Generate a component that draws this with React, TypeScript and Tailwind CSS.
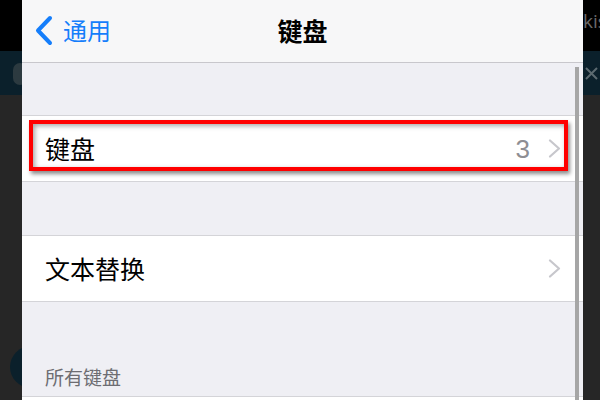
const cjk = { fontFamily: '"Noto Sans CJK SC", "Noto Sans", sans-serif' };

function Chevron() {
  return (
    <svg width="13" height="19" viewBox="0 0 13 19" fill="none">
      <path d="M2 1.5 L11 9.5 L2 17.5" stroke="#c7c7cc" strokeWidth="2.2" strokeLinecap="round" strokeLinejoin="round" />
    </svg>
  );
}

export default function App() {
  return (
    <div className="flex h-[400px] w-[600px] overflow-hidden" style={cjk}>
      {/* left background strip */}
      <div className="flex w-[22px] shrink-0 flex-col">
        <div className="h-[51px] bg-black" />
        <div className="relative h-[44px] bg-[#0b202b]">
          <div className="absolute left-[13px] top-[12px] h-[22px] w-[14px] rounded-full bg-[#2c3a40]" />
        </div>
        <div className="relative flex-1 bg-[#262626]">
          <div className="absolute left-[10px] top-[251px] h-[42px] w-[42px] rounded-full bg-[#0b202b]" />
        </div>
      </div>

      {/* phone screen */}
      <div className="relative flex w-[561px] shrink-0 flex-col bg-[#efeff4]">
        {/* nav bar */}
        <div className="grid h-[63px] grid-cols-3 items-center border-b border-[#c8c7cc] bg-[#f7f7f8] pb-[2px]">
          <div className="flex items-center gap-[10px] pl-[12px] text-[24px] text-[#157efb]">
            <svg width="19" height="31" viewBox="0 0 19 31" fill="none">
              <path d="M16 3 L4 15.5 L16 28" stroke="#157efb" strokeWidth="4" strokeLinecap="round" strokeLinejoin="round" />
            </svg>
            <span className="leading-none">通用</span>
          </div>
          <div className="text-center text-[25px] font-bold leading-none text-black">键盘</div>
          <div />
        </div>

        <div className="h-[52px]" />

        {/* keyboard row */}
        <div className="relative flex h-[67px] items-center border-y border-[#d4d4d8] bg-white pl-[23px] pr-[22px]">
          <span className="flex-1 text-[25px] leading-none text-black">键盘</span>
          <span className="mr-[18px] text-[26px] leading-none text-[#8e8e93]" style={{ fontFamily: '"Liberation Sans", sans-serif' }}>3</span>
          <Chevron />
          <div className="absolute left-[7px] top-[4px] h-[51px] w-[539px] border-[4px] border-[#ff0000] shadow-[2px_3px_4px_rgba(0,0,0,0.45),inset_2px_2px_5px_rgba(0,0,0,0.35)]" />
        </div>

        <div className="h-[53px]" />

        {/* text replacement row */}
        <div className="flex h-[67px] items-center border-y border-[#d4d4d8] bg-white pl-[23px] pr-[22px]">
          <span className="flex-1 text-[25px] leading-none text-black">文本替换</span>
          <Chevron />
        </div>

        <div className="flex h-[94px] items-end pb-[10px] pl-[23px]">
          <span className="text-[19px] leading-none text-[#6d6d72]">所有键盘</span>
        </div>
        <div className="flex-1 border-t border-[#d4d4d8] bg-white" />

        {/* scrollbar */}
        <div className="absolute right-[4px] top-[67px] h-[340px] w-[4px] bg-[#a6a6a6]" />
      </div>

      {/* right background strip */}
      <div className="flex w-[17px] shrink-0 flex-col">
        <div className="h-[51px] overflow-hidden bg-black pt-[9px]">
          <span className="whitespace-nowrap text-[19px] leading-none text-[#6a6a6a]" style={{ fontFamily: '"Open Sans", sans-serif' }}>kis</span>
        </div>
        <div className="flex h-[44px] items-center bg-[#0b202b] pl-[2px]">
          <svg width="13" height="13" viewBox="0 0 13 13">
            <path d="M1 1 L12 12 M12 1 L1 12" stroke="#5c6a70" strokeWidth="2" />
          </svg>
        </div>
        <div className="flex-1 bg-[#262626]" />
      </div>
    </div>
  );
}
